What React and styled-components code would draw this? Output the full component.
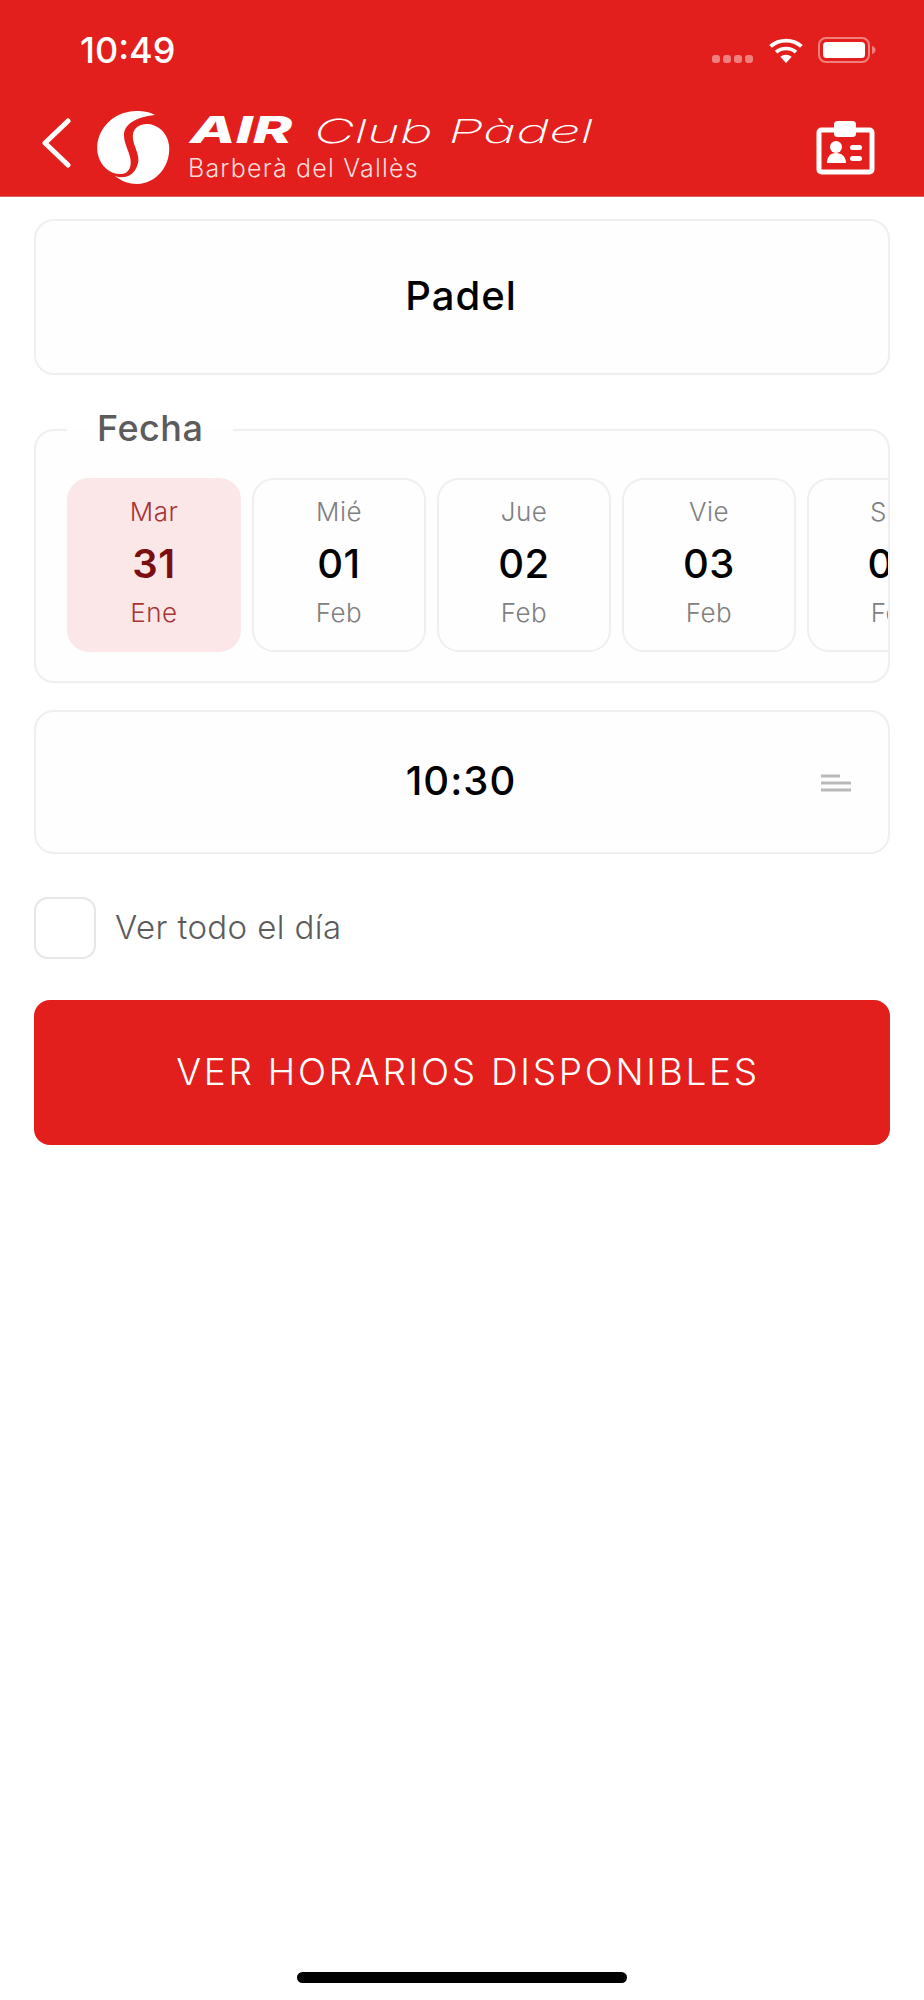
import React from "react";
import styled, { createGlobalStyle } from "styled-components";

const RED = "#e21f1d";
const LINE = "#efefef";

const Global = createGlobalStyle`
  html, body { margin: 0; padding: 0; background: #fff; }
  body { font-family: Inter, "Noto Sans", sans-serif; }
`;

const Page = styled.div`
  width: 924px;
  height: 2000px;
  display: flex;
  flex-direction: column;
  overflow: hidden;
  background: #fff;
`;

const Header = styled.header`
  height: 197px;
  box-sizing: border-box;
  background: ${RED};
  border-bottom: 1px solid #d8625f;
  display: flex;
  flex-direction: column;
`;

const StatusBar = styled.div`
  height: 100px;
  display: flex;
  align-items: flex-start;
  padding: 31px 48px 0 80px;
  box-sizing: border-box;
`;

const Clock = styled.div`
  font-size: 36px;
  line-height: 38px;
  font-weight: 500;
  color: #fff;
`;

const StatusIcons = styled.div`
  margin-left: auto;
  display: flex;
  align-items: center;
  height: 26px;
  margin-top: 6px;
`;

const Dots = styled.div`
  display: flex;
  gap: 3px;
  align-self: flex-end;
  margin-right: 14px;
`;

const Dot = styled.span`
  width: 8px;
  height: 8px;
  border-radius: 3px;
  background: #f0807e;
`;

const Nav = styled.div`
  flex: 1;
  display: flex;
  align-items: flex-start;
  padding-left: 41px;
  padding-right: 49px;
`;

const Brand = styled.div`
  margin-left: 26px;
  margin-top: 11px;
  display: flex;
  gap: 18px;
`;

const BrandText = styled.div`
  margin-top: -6px;
  display: flex;
  flex-direction: column;
  color: #fff;
`;

const BrandPlace = styled.div`
  margin-top: 5px;
  font-size: 25px;
  line-height: 28px;
  font-weight: 300;
  letter-spacing: 1.2px;
  color: #fbdcdb;
`;

const BadgeWrap = styled.div`
  margin-left: auto;
  margin-top: 21px;
`;

const Content = styled.main`
  padding: 22px 34px 0;
  display: flex;
  flex-direction: column;
`;

const Card = styled.div`
  box-sizing: border-box;
  height: ${(p) => p.$h}px;
  border: 2px solid ${LINE};
  border-radius: 20px;
  background: #fefefe;
  display: flex;
  align-items: center;
  justify-content: center;
  position: relative;
`;

const CardTitle = styled.div`
  font-size: 40px;
  font-weight: 500;
  letter-spacing: 1px;
  color: #000;
  margin: -4px 2px 0 0;
`;

const DateFieldset = styled.fieldset`
  margin: 33px 0 0;
  padding: 0;
  height: 275px;
  box-sizing: border-box;
  border: 2px solid ${LINE};
  border-radius: 20px;
  background: #fefefe;
  min-width: 0;
`;

const Legend = styled.legend`
  margin-left: 31px;
  padding: 0 30px 4px;
  font-size: 36px;
  line-height: 40px;
  font-weight: 500;
  letter-spacing: 0.5px;
  color: #5c5c5c;
`;

const DayRow = styled.div`
  display: flex;
  gap: 11px;
  margin-top: 26px;
  padding-left: 31px;
  overflow: hidden;
`;

const Day = styled.div`
  flex: none;
  box-sizing: border-box;
  width: 174px;
  height: 174px;
  border-radius: 22px;
  border: 2px solid ${(p) => (p.$on ? "#fce7e8" : LINE)};
  background: ${(p) => (p.$on ? "#fce7e8" : "#fefefe")};
  display: flex;
  flex-direction: column;
  align-items: center;
  padding-top: 16px;
`;

const DayLabel = styled.div`
  font-size: 26px;
  line-height: 32px;
  font-weight: 300;
  letter-spacing: 0.5px;
  color: ${(p) => (p.$on ? "#a83436" : "#808080")};
`;

const DayNum = styled.div`
  font-size: 40px;
  line-height: 46px;
  margin: 13px 0 10px;
  letter-spacing: 0.5px;
  font-weight: ${(p) => (p.$on ? 600 : 500)};
  color: ${(p) => (p.$on ? "#7a0e10" : "#000")};
`;

const TimeCard = styled(Card)`
  margin-top: 27px;
`;

const SortIcon = styled.svg`
  position: absolute;
  right: 37px;
  top: 62px;
`;

const CheckRow = styled.label`
  margin-top: 43px;
  display: flex;
  align-items: center;
  gap: 19px;
`;

const CheckBox = styled.span`
  box-sizing: border-box;
  width: 62px;
  height: 62px;
  border: 2px solid #e6e6e6;
  border-radius: 14px;
  background: #fff;
`;

const CheckText = styled.span`
  margin-top: -2px;
  font-size: 33px;
  font-weight: 300;
  letter-spacing: 0.4px;
  color: #5c5c5c;
`;

const Submit = styled.button`
  margin-top: 41px;
  height: 145px;
  padding: 0 0 3px 12px;
  border: 0;
  border-radius: 16px;
  background: ${RED};
  color: #fff;
  font-family: Inter, sans-serif;
  font-size: 37px;
  font-weight: 300;
  letter-spacing: 2.7px;
`;

const HomeBar = styled.div`
  margin: auto auto 17px;
  width: 330px;
  height: 11px;
  border-radius: 6px;
  background: #000;
`;

const days = [
  { top: "Mar", num: "31", bottom: "Ene", on: true },
  { top: "Mié", num: "01", bottom: "Feb" },
  { top: "Jue", num: "02", bottom: "Feb" },
  { top: "Vie", num: "03", bottom: "Feb" },
  { top: "Sáb", num: "04", bottom: "Feb" },
];

const Wifi = () => (
  <svg width="38" height="26" viewBox="0 0 36 26" preserveAspectRatio="none" style={{ marginRight: 13 }}>
    <path d="M18 26l-5.4-6.2a8 8 0 0 1 10.8 0z" fill="#fff" />
    <path d="M8.6 15.2a14 14 0 0 1 18.8 0" fill="none" stroke="#fff" strokeWidth="3.6" />
    <path d="M3.4 9.4a21.5 21.5 0 0 1 29.2 0" fill="none" stroke="#fff" strokeWidth="3.8" />
  </svg>
);

const Battery = () => (
  <svg width="58" height="26" viewBox="0 0 58 26">
    <rect x="1" y="1" width="50" height="24" rx="7" fill="none" stroke="#f0807e" strokeWidth="2" />
    <rect x="5" y="5" width="42" height="16" rx="3.5" fill="#fff" />
    <path d="M54 9c2 .6 3.5 2 3.5 4s-1.500 3.400-3.500 4z" fill="#f0807e" />
  </svg>
);

const Chevron = () => (
  <svg width="30" height="50" viewBox="0 0 30 50" style={{ marginTop: 18 }}>
    <path d="M27 3L4 25l23 22" fill="none" stroke="#fff" strokeWidth="5" strokeLinecap="round" strokeLinejoin="round" />
  </svg>
);

const LogoMark = () => (
  <svg width="73" height="74" viewBox="0 0 73 74">
    <path d="M58 4C50-1 30-3 15 8 3 17-2 32 1 44c3 12 13 20 24 19 8-1 10-9 8-17-2-8-6-14-6-22C27 14 38 6 58 4z" fill="#fff" />
    <path d="M44 14c11-4 26 4 28 20 2 18-10 38-32 39-8 0-16-3-22-8 8 3 20 1 23-13 2-8-4-16-5-24-1-7 2-12 8-14z" fill="#fff" />
  </svg>
);

const Wordmark = () => (
  <svg width="420" height="44" viewBox="0 0 420 44" fill="#fff" fontFamily="Inter, sans-serif" fontStyle="italic">
    <text x="2" y="38" fontSize="37" fontWeight="800" textLength="102" lengthAdjust="spacingAndGlyphs">AIR</text>
    <text x="126" y="38" fontSize="33" fontWeight="200" textLength="279" lengthAdjust="spacingAndGlyphs">Club Pàdel</text>
  </svg>
);

const IdBadge = () => (
  <svg width="59" height="54" viewBox="0 0 59 54">
    <rect x="3" y="9" width="53" height="42" rx="2.500" fill="none" stroke="#fff" strokeWidth="5" />
    <rect x="18" y="0" width="22" height="16" rx="3.500" fill="#fff" />
    <circle cx="20" cy="26" r="6" fill="#fff" />
    <path d="M11 42c0-6 3-10 9-10s10 4 10 10z" fill="#fff" />
    <rect x="34" y="24" width="12" height="5" rx="2.500" fill="#fff" />
    <rect x="34" y="35" width="12" height="5" rx="2.500" fill="#fff" />
  </svg>
);

export default function App() {
  return (
    <Page>
      <Global />
      <Header>
        <StatusBar>
          <Clock>10:49</Clock>
          <StatusIcons>
            <Dots>
              <Dot /><Dot /><Dot /><Dot />
            </Dots>
            <Wifi />
            <Battery />
          </StatusIcons>
        </StatusBar>
        <Nav>
          <Chevron />
          <Brand>
            <LogoMark />
            <BrandText>
              <Wordmark />
              <BrandPlace>Barberà del Vallès</BrandPlace>
            </BrandText>
          </Brand>
          <BadgeWrap>
            <IdBadge />
          </BadgeWrap>
        </Nav>
      </Header>
      <Content>
        <Card $h={156}>
          <CardTitle>Padel</CardTitle>
        </Card>
        <DateFieldset>
          <Legend>Fecha</Legend>
          <DayRow>
            {days.map((d) => (
              <Day key={d.num} $on={d.on}>
                <DayLabel $on={d.on}>{d.top}</DayLabel>
                <DayNum $on={d.on}>{d.num}</DayNum>
                <DayLabel $on={d.on}>{d.bottom}</DayLabel>
              </Day>
            ))}
          </DayRow>
        </DateFieldset>
        <TimeCard $h={144}>
          <CardTitle>10:30</CardTitle>
          <SortIcon width="30" height="18" viewBox="0 0 30 18">
            <path d="M0 2h19M0 9h30M0 16h30" stroke="#b9b9b9" strokeWidth="3" />
          </SortIcon>
        </TimeCard>
        <CheckRow>
          <CheckBox />
          <CheckText>Ver todo el día</CheckText>
        </CheckRow>
        <Submit>VER HORARIOS DISPONIBLES</Submit>
      </Content>
      <HomeBar />
    </Page>
  );
}
